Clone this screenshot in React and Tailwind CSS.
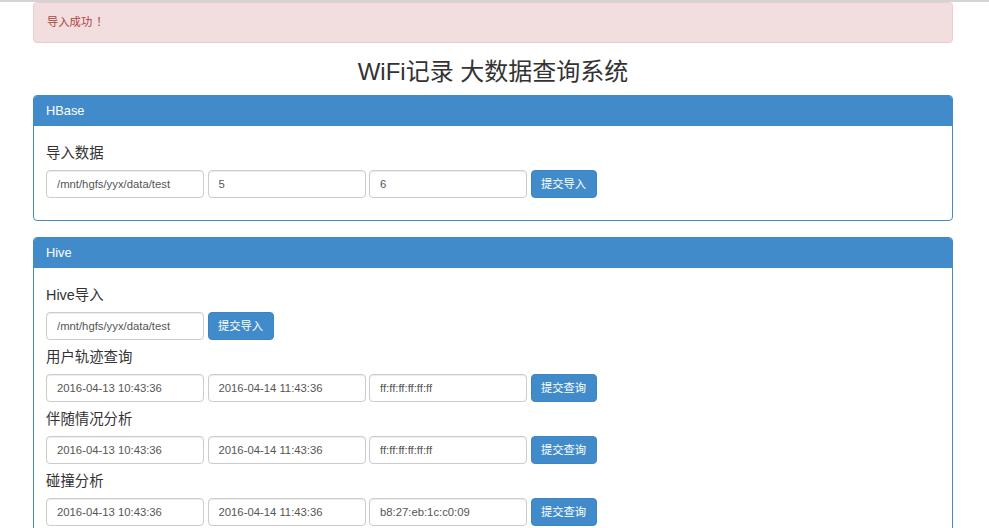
import React from "react";

const font = { fontFamily: '"Liberation Sans", Arial, "Noto Sans CJK SC", sans-serif' };

const Field = ({ value }) => (
  <input
    type="text"
    defaultValue={value}
    readOnly
    className="w-[158px] h-[28px] rounded-[4px] border border-[#cccccc] bg-white px-[10px] text-[11.3px] text-[#555555] outline-none shadow-[inset_0_1px_1px_rgba(0,0,0,0.075)]"
  />
);

const Btn = ({ children }) => (
  <button className="w-[66px] h-[28px] rounded-[4px] bg-[#428bca] border border-[#3d84c2] text-white text-[11.3px]">
    {children}
  </button>
);

const Group = ({ title, fields, action }) => (
  <div>
    <div className="mt-[7px] mb-[7px] text-[14.4px] leading-[20px] text-[#333333]">{title}</div>
    <div className="flex gap-[3.5px]">
      {fields.map((f, i) => (
        <Field key={i} value={f} />
      ))}
      <Btn>{action}</Btn>
    </div>
  </div>
);

const Panel = ({ title, children, className }) => (
  <div className={"rounded-[4px] border border-[#428bca] bg-white overflow-hidden " + (className || "")}>
    <div className="h-[30px] bg-[#428bca] px-[12px] flex items-center text-white text-[12.8px]">{title}</div>
    <div className="px-[12px] pt-[10px] pb-[22px]">{children}</div>
  </div>
);

export default function App() {
  const t1 = "2016-04-13 10:43:36";
  const t2 = "2016-04-14 11:43:36";
  return (
    <div style={font} className="h-[528px] overflow-hidden bg-white border-t-2 border-[#d4d4d4]">
      <div className="w-[920px] ml-[33px]">
        <div className="rounded-[4px] border border-[#ebccd1] bg-[#f2dede] px-[13px] py-[11px] text-[11.3px] leading-[17px] text-[#a94442]">
          导入成功<span className="pl-[4px]">！</span>
        </div>
        <h1 className="mt-[14px] mb-[8px] text-center text-[24px] leading-[30px] text-[#333333]">
          WiFi记录 大数据查询系统
        </h1>
        <Panel title="HBase">
          <Group title="导入数据" fields={["/mnt/hgfs/yyx/data/test", "5", "6"]} action="提交导入" />
        </Panel>
        <Panel title="Hive" className="mt-[16px]">
          <Group title="Hive导入" fields={["/mnt/hgfs/yyx/data/test"]} action="提交导入" />
          <Group title="用户轨迹查询" fields={[t1, t2, "ff:ff:ff:ff:ff:ff"]} action="提交查询" />
          <Group title="伴随情况分析" fields={[t1, t2, "ff:ff:ff:ff:ff:ff"]} action="提交查询" />
          <Group title="碰撞分析" fields={[t1, t2, "b8:27:eb:1c:c0:09"]} action="提交查询" />
        </Panel>
      </div>
    </div>
  );
}
